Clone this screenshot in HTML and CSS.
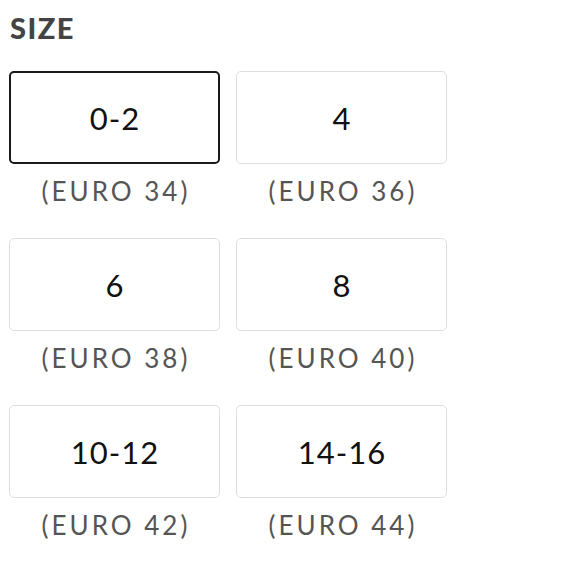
FILE: index.html
```html
<!DOCTYPE html>
<html>
<head>
<meta charset="utf-8">
<link rel="stylesheet" href="styles.css">
</head>
<body>
<div class="panel">
  <h2 class="title">SIZE</h2>
  <div class="grid">
    <div class="item"><div class="box selected">0-2</div><div class="label">(EURO 34)</div></div>
    <div class="item"><div class="box">4</div><div class="label">(EURO 36)</div></div>
    <div class="item"><div class="box">6</div><div class="label">(EURO 38)</div></div>
    <div class="item"><div class="box">8</div><div class="label">(EURO 40)</div></div>
    <div class="item"><div class="box">10-12</div><div class="label">(EURO 42)</div></div>
    <div class="item"><div class="box">14-16</div><div class="label">(EURO 44)</div></div>
  </div>
</div>
</body>
</html>
```
FILE: styles.css
```css
html, body {
  margin: 0;
  padding: 0;
  background: #ffffff;
}
.panel {
  padding: 10px 0 0 9px;
  font-family: "Lato", "DejaVu Sans", sans-serif;
}
.title {
  margin: 0 0 25px 1px;
  font-size: 29px;
  line-height: 36px;
  font-weight: 900;
  color: #444444;
  letter-spacing: 1.5px;
}
.grid {
  display: grid;
  grid-template-columns: 211px 211px;
  column-gap: 16px;
  row-gap: 31px;
}
.item {
  display: flex;
  flex-direction: column;
}
.box {
  box-sizing: border-box;
  height: 93px;
  border: 1.5px solid #dedede;
  border-radius: 5px;
  display: flex;
  align-items: center;
  justify-content: center;
  font-size: 31px;
  color: #111111;
  letter-spacing: 1px;
  padding-left: 1px;
}
.box.selected {
  border: 2px solid #1a1a1a;
}
.label {
  margin-top: 11px;
  line-height: 32px;
  font-size: 26px;
  color: #555555;
  text-align: center;
  letter-spacing: 3px;
  padding-left: 3px;
}
```
